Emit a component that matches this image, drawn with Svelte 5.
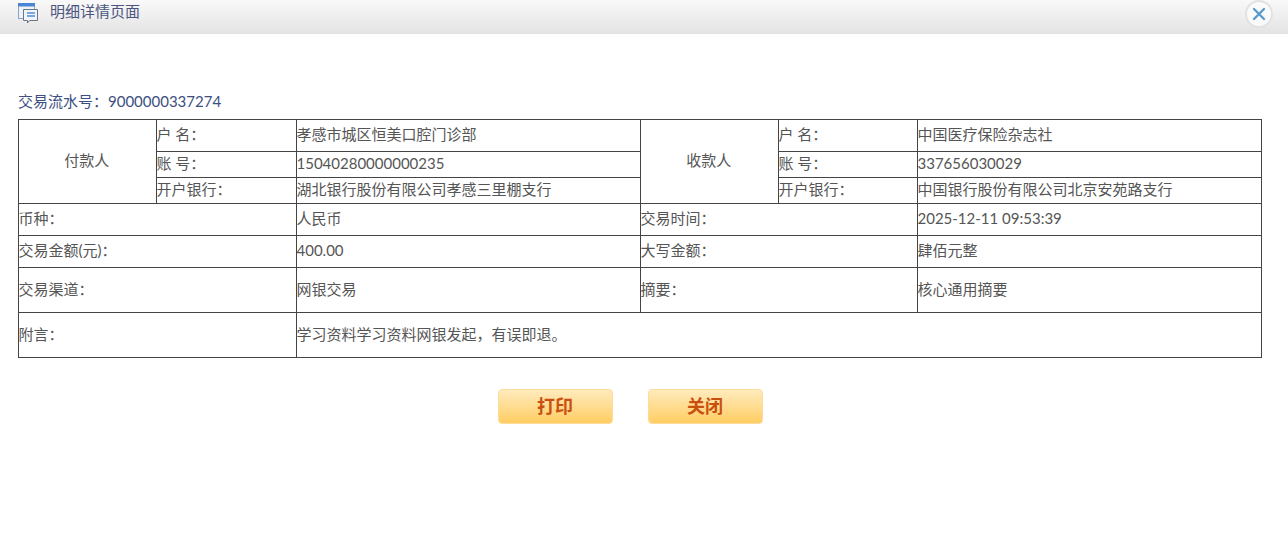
<script>
  const payer = [
    ["户 名：", "孝感市城区恒美口腔门诊部"],
    ["账 号：", "15040280000000235"],
    ["开户银行：", "湖北银行股份有限公司孝感三里棚支行"],
  ];
  const payee = [
    ["户 名：", "中国医疗保险杂志社"],
    ["账 号：", "337656030029"],
    ["开户银行：", "中国银行股份有限公司北京安苑路支行"],
  ];
  const rows = [
    { h: "h32", a: "币种：", b: "人民币", c: "交易时间：", d: "2025-12-11 09:53:39" },
    { h: "h32", a: "交易金额(元)：", b: "400.00", c: "大写金额：", d: "肆佰元整" },
    { h: "h45", a: "交易渠道：", b: "网银交易", c: "摘要：", d: "核心通用摘要" },
  ];
</script>

<div class="page">
  <header class="bar">
    <div class="title">
      <svg width="22" height="22" viewBox="0 0 22 22">
        <rect x="1.500" y="1.500" width="16" height="15" fill="#eef3fa" stroke="#8aa5cf" />
        <rect x="1" y="1" width="17" height="3.500" fill="#4a86d4" />
        <path d="M6.500 7.500h14v11h-8l-2 2.500v-2.500h-4z" fill="#f2f4f7" stroke="#6b7684" />
        <path d="M10 11h8M10 14h8" stroke="#4a90dc" stroke-width="1.400" />
      </svg>
      <span>明细详情页面</span>
    </div>
    <button class="close" aria-label="关闭">
      <svg width="14" height="14" viewBox="0 0 14 14">
        <path d="M2 2l10 10M12 2L2 12" stroke="#5b9bcc" stroke-width="2.400" stroke-linecap="round" />
      </svg>
    </button>
  </header>

  <main class="content">
    <p class="serial">交易流水号：9000000337274</p>
    <table>
      <colgroup>
        <col style="width:138px" />
        <col style="width:140px" />
        <col style="width:344px" />
        <col style="width:138px" />
        <col style="width:139px" />
        <col style="width:344px" />
      </colgroup>
      <tbody>
        {#each payer as p, i}
          <tr class={i === 0 ? "h32" : "h26"}>
            {#if i === 0}<td rowspan="3" class="center">付款人</td>{/if}
            <td>{p[0]}</td>
            <td>{p[1]}</td>
            {#if i === 0}<td rowspan="3" class="center">收款人</td>{/if}
            <td>{payee[i][0]}</td>
            <td>{payee[i][1]}</td>
          </tr>
        {/each}
        {#each rows as r}
          <tr class={r.h}>
            <td colspan="2">{r.a}</td>
            <td>{r.b}</td>
            <td colspan="2">{r.c}</td>
            <td>{r.d}</td>
          </tr>
        {/each}
        <tr class="h45">
          <td colspan="2">附言：</td>
          <td colspan="4">学习资料学习资料网银发起，有误即退。</td>
        </tr>
      </tbody>
    </table>
    <div class="actions">
      <button class="btn">打印</button>
      <button class="btn">关闭</button>
    </div>
  </main>
</div>

<style>
  :global(body) {
    background: #fff;
    font-family: "Lato", "Noto Sans CJK SC", sans-serif;
    font-size: 15px;
    color: #555;
  }

  .bar {
    height: 34px;
    display: flex;
    justify-content: space-between;
    background: linear-gradient(#f9f9f9, #e3e3e3);
    box-sizing: border-box;
    padding: 0 15px 0 17px;
  }

  .title {
    display: flex;
    align-items: flex-start;
    gap: 11px;
    padding-top: 2px;
    color: #4b5580;
    line-height: 20px;
  }

  .title span {
    margin-top: -1px;
  }

  .close {
    width: 28px;
    height: 28px;
    padding: 0;
    border: 2px solid #e2e2e2;
    border-radius: 50%;
    background: #fafafa;
    display: flex;
    align-items: center;
    justify-content: center;
  }

  .content {
    padding: 56px 26px 0 18px;
  }

  .serial {
    margin: 0 0 7px;
    line-height: 22px;
    color: #3c4f80;
  }

  table {
    table-layout: fixed;
    width: 1244px;
    border-collapse: collapse;
  }

  td {
    border: 1px solid #444;
    padding: 0 1px 3px 0;
    line-height: 20px;
    white-space: nowrap;
    text-indent: -0.5px;
  }

  .center {
    text-align: center;
  }

  .h26 {
    height: 26px;
  }

  .h32 {
    height: 32px;
  }

  .h45 {
    height: 45px;
  }

  .actions {
    display: flex;
    justify-content: center;
    gap: 35px;
    margin-top: 31px;
    padding-right: 20px;
  }

  .btn {
    width: 115px;
    height: 35px;
    padding: 0 0 3px;
    border: 1px solid #fcdc98;
    border-radius: 4px;
    background: linear-gradient(#ffebbd, #ffcd63);
    color: #c9500f;
    font: bold 18px "Noto Sans CJK SC", sans-serif;
  }
</style>
